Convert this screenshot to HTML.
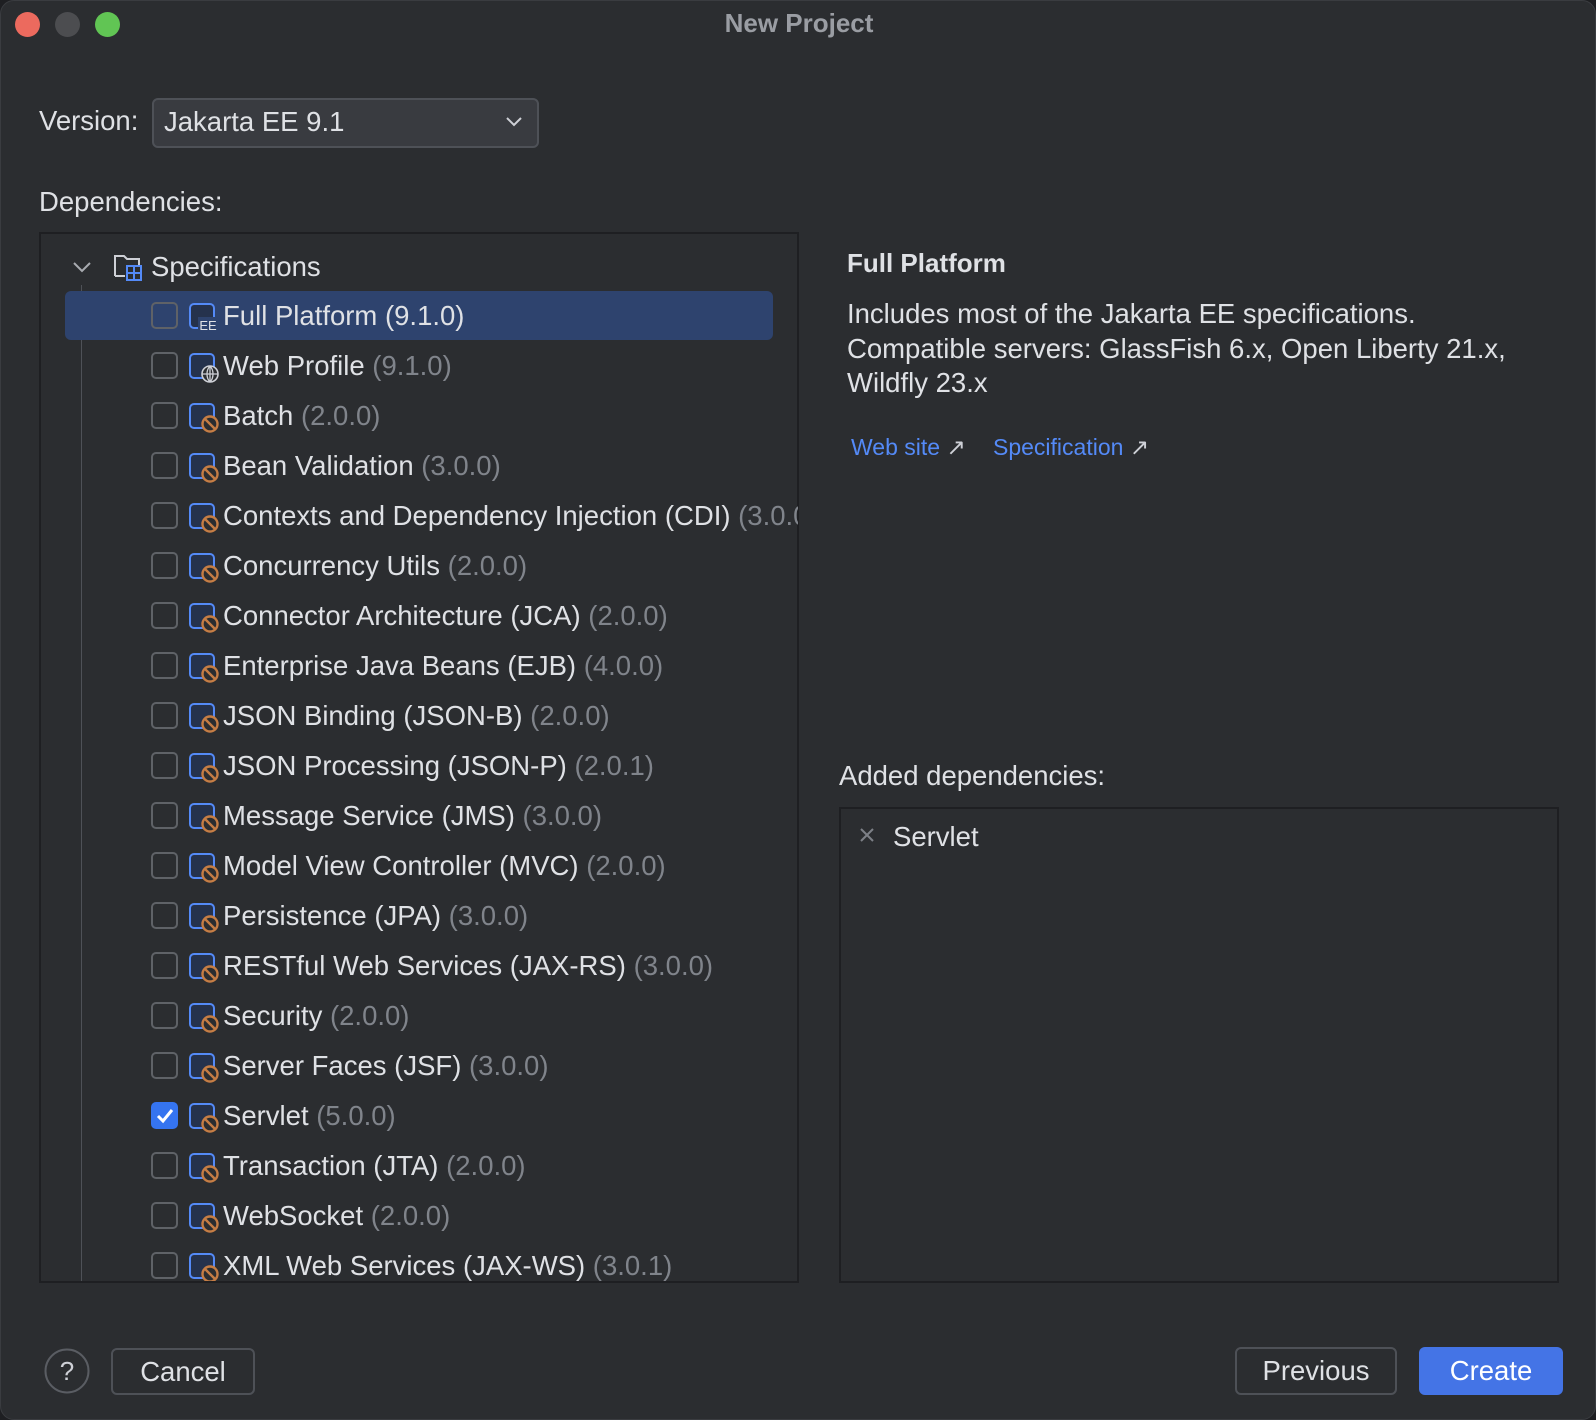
<!DOCTYPE html>
<html><head><meta charset="utf-8"><style>
*{margin:0;padding:0;box-sizing:border-box}
body{width:1596px;height:1420px;background:#1e1f22;font-family:"Liberation Sans",sans-serif;color:#dfe1e5;overflow:hidden;position:relative}
.win{position:absolute;left:0;top:0;width:1596px;height:1420px;background:#2b2d30;border-radius:14px;border:1px solid #3a3c40}
.a{position:absolute;white-space:nowrap}
.t{font-size:27.5px}
.row{position:absolute;left:64px;width:708px;height:50px}
.cb{position:absolute;left:86px;top:11px;width:27px;height:27px;border:2px solid #5f6267;border-radius:5px}
.ic{position:absolute;left:124px;top:12px}
.lb{position:absolute;left:158px;top:0;line-height:50px;font-size:27.5px;white-space:nowrap}
.v{color:#80848b}
.btn{position:absolute;border:2px solid #4e5157;border-radius:6px;text-align:center;font-size:27.5px;color:#dfe1e5}
</style></head><body>
<div class="win">
<div class="a" style="left:14px;top:11px;width:25px;height:25px;border-radius:50%;background:#ec6a5e"></div>
<div class="a" style="left:54px;top:11px;width:25px;height:25px;border-radius:50%;background:#4c4d50"></div>
<div class="a" style="left:94px;top:11px;width:25px;height:25px;border-radius:50%;background:#61c554"></div>
<div class="a" style="left:0;width:1596px;text-align:center;top:7px;font-size:26px;font-weight:bold;color:#9a9da3">New Project</div>

<div class="a t" style="left:38px;top:104px">Version:</div>
<div class="a" style="left:151px;top:97px;width:387px;height:50px;background:#393b40;border:2px solid #4e5157;border-radius:6px"></div>
<div class="a t" style="left:163px;top:105px">Jakarta EE 9.1</div>
<svg class="a" style="left:504px;top:113px" width="18" height="14"><path d="M2 4l7 7 7-7" fill="none" stroke="#ced0d6" stroke-width="2"/></svg>

<div class="a t" style="left:38px;top:185px">Dependencies:</div>
<div class="a" style="left:38px;top:231px;width:760px;height:1051px;border:2px solid #1e1f22;overflow:hidden">
<div class="a" style="left:40px;top:51px;width:1px;height:1010px;background:#4e5157"></div>
<svg class="a" style="left:31px;top:26px" width="20" height="14"><path d="M2 3l8 8 8-8" fill="none" stroke="#a8abb0" stroke-width="2"/></svg>
<svg class="a" style="left:72px;top:18px" width="32" height="30"><path d="M2 24V4h9l3 3h12v8" fill="none" stroke="#ced0d6" stroke-width="2"/><path d="M2 24h10" stroke="#ced0d6" stroke-width="2"/><rect x="14" y="14" width="14" height="14" fill="#2b2d30" stroke="#548af7" stroke-width="2"/><path d="M21 14v14M14 21h14" stroke="#548af7" stroke-width="2"/></svg>
<div class="a t" style="left:110px;top:17px">Specifications</div>
</div>
<div id="rows" class="a" style="left:0;top:0;width:797px;height:1280px;overflow:hidden">
<div class="a" style="left:64px;top:290px;width:708px;height:49px;background:#2e436e;border-radius:6px"></div>
</div>

<div class="a" style="left:846px;top:247px;font-size:26px;font-weight:bold">Full Platform</div>
<div class="a t" style="left:846px;top:296px;line-height:34.5px;white-space:nowrap;width:740px">Includes most of the Jakarta EE specifications.<br>Compatible servers: GlassFish 6.x, Open Liberty 21.x,<br>Wildfly 23.x</div>
<div class="a" style="left:850px;top:433px;font-size:23px;color:#548af7">Web site <span style="color:#ced0d6">↗</span></div>
<div class="a" style="left:992px;top:433px;font-size:23px;color:#548af7">Specification <span style="color:#ced0d6">↗</span></div>

<div class="a t" style="left:838px;top:759px">Added dependencies:</div>
<div class="a" style="left:838px;top:806px;width:720px;height:476px;border:2px solid #1e1f22"></div>
<svg class="a" style="left:858px;top:826px" width="16" height="16"><path d="M2 2l12 12M14 2L2 14" stroke="#7d8087" stroke-width="2"/></svg>
<div class="a t" style="left:892px;top:820px">Servlet</div>

<svg class="a" style="left:43px;top:1347px" width="46" height="46"><circle cx="23" cy="23" r="21.5" fill="none" stroke="#5a5d63" stroke-width="2"/><text x="23" y="32" text-anchor="middle" font-size="26" fill="#ced0d6" font-family="Liberation Sans">?</text></svg>
<div class="btn" style="left:110px;top:1347px;width:144px;height:47px;line-height:43px">Cancel</div>
<div class="btn" style="left:1234px;top:1346px;width:162px;height:48px;line-height:44px">Previous</div>
<div class="btn" style="left:1418px;top:1346px;width:144px;height:48px;line-height:48px;background:#4474e6;border:none;color:#fff">Create</div>
</div>
<script>
var items=[["Full Platform (9.1.0)","",1],["Web Profile","(9.1.0)",2],["Batch","(2.0.0)"],["Bean Validation","(3.0.0)"],["Contexts and Dependency Injection (CDI)","(3.0.0)"],["Concurrency Utils","(2.0.0)"],["Connector Architecture (JCA)","(2.0.0)"],["Enterprise Java Beans (EJB)","(4.0.0)"],["JSON Binding (JSON-B)","(2.0.0)"],["JSON Processing (JSON-P)","(2.0.1)"],["Message Service (JMS)","(3.0.0)"],["Model View Controller (MVC)","(2.0.0)"],["Persistence (JPA)","(3.0.0)"],["RESTful Web Services (JAX-RS)","(3.0.0)"],["Security","(2.0.0)"],["Server Faces (JSF)","(3.0.0)"],["Servlet","(5.0.0)",0,1],["Transaction (JTA)","(2.0.0)"],["WebSocket","(2.0.0)"],["XML Web Services (JAX-WS)","(3.0.1)"]];
var h="";
items.forEach(function(it,i){
 var top=289.6+50*i;
 var base='<rect x="1" y="1" width="24" height="24" rx="4" fill="#25324d" stroke="#548af7" stroke-width="2"/>';
 var badge;
 if(it[2]==1) badge='<rect x="9" y="14" width="20" height="14" fill="#2e436e"/><text x="19" y="27" text-anchor="middle" font-size="13" fill="#dfe1e5" font-family="Liberation Sans">EE</text>';
 else if(it[2]==2) badge='<circle cx="21" cy="21" r="8" fill="#2b2d30" stroke="#ced0d6" stroke-width="1.6"/><path d="M13 21h16M21 13v16M21 13c-4 4-4 12 0 16M21 13c4 4 4 12 0 16" fill="none" stroke="#ced0d6" stroke-width="1.3"/>';
 else badge='<circle cx="21" cy="21" r="7.5" fill="#2b2d30" stroke="#c57d45" stroke-width="2.4"/><path d="M16 16l10 10" stroke="#c57d45" stroke-width="2.4"/>';
 var cb=it[3]?'<div class="cb" style="background:#3574f0;border-color:#3574f0"><svg width="23" height="23" style="position:absolute;left:0;top:0"><path d="M5 12l5 5 9-11" fill="none" stroke="#fff" stroke-width="3"/></svg></div>':'<div class="cb"></div>';
 h+='<div class="row" style="top:'+top+'px">'+cb+'<svg class="ic" width="32" height="32">'+base+badge+'</svg><div class="lb">'+it[0]+(it[1]?' <span class="v">'+it[1]+'</span>':'')+'</div></div>';
});
document.getElementById("rows").insertAdjacentHTML("beforeend",h);
</script>
</body></html>
